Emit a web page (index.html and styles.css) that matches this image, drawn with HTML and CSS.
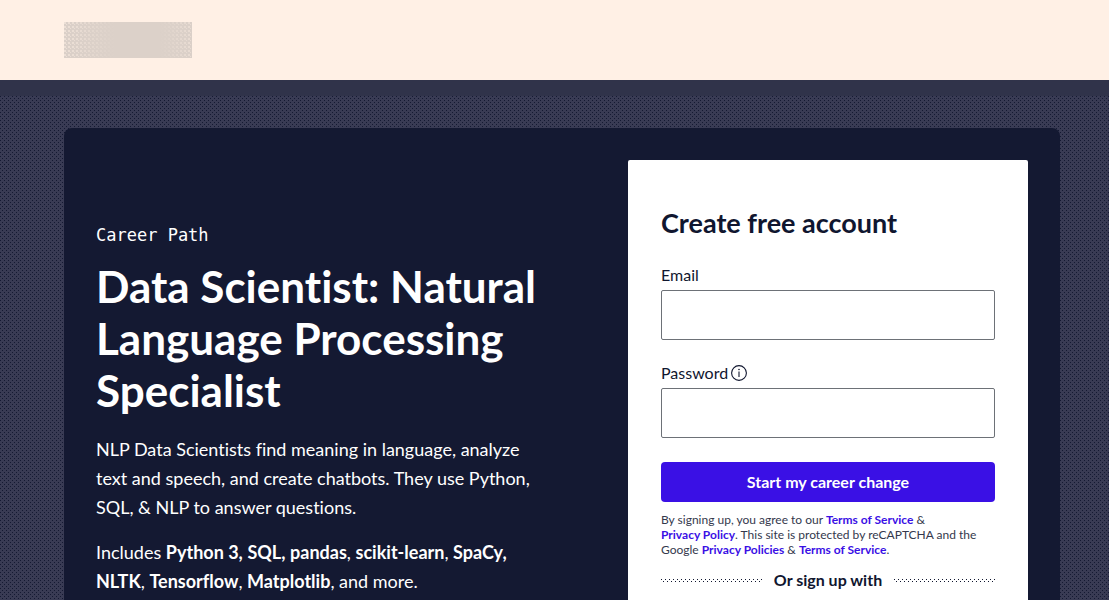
FILE: index.html
```html
<!DOCTYPE html>
<html lang="en">
<head>
<meta charset="utf-8">
<meta name="viewport" content="width=device-width, initial-scale=1">
<title>Data Scientist: Natural Language Processing Specialist</title>
<link rel="stylesheet" href="styles.css">
</head>
<body>
<header class="site-header"><div class="logo-placeholder"></div></header>
<main class="hero">
  <div class="card">
    <section class="intro">
      <p class="eyebrow">Career Path</p>
      <h1 class="title">Data Scientist: Natural Language Processing Specialist</h1>
      <p class="text">NLP Data Scientists find meaning in language, analyze text and speech, and create chatbots. They use Python, SQL, &amp; NLP to answer questions.</p>
      <p class="text">Includes <strong>Python 3,</strong> <strong>SQL,</strong> <strong>pandas</strong>, <strong>scikit-learn</strong>, <strong>SpaCy,</strong> <strong>NLTK</strong>, <strong>Tensorflow</strong>, <strong>Matplotlib</strong>, and more.</p>
    </section>
    <form class="signup">
      <h2 class="signup-title">Create free account</h2>
      <div class="field">
        <label class="label" for="email">Email</label>
        <input class="input" id="email" type="email">
      </div>
      <div class="field">
        <div class="label-row">
          <label class="label" for="password">Password</label>
          <button class="info" type="button" aria-label="Password requirements">
            <svg class="info-icon" viewBox="0 0 16 16" aria-hidden="true"><circle cx="8" cy="8" r="7.4" fill="none" stroke="currentColor" stroke-width="1.1"/><path d="M8 6.6V12" fill="none" stroke="currentColor" stroke-width="1.1"/><circle cx="8" cy="4.5" r=".8" fill="currentColor"/></svg>
          </button>
        </div>
        <input class="input" id="password" type="password">
      </div>
      <button class="submit" type="submit">Start my career change</button>
      <p class="legal">By signing up, you agree to our <a class="link" href="#terms">Terms of Service</a> &amp; <br><a class="link" href="#privacy">Privacy Policy</a>. This site is protected by reCAPTCHA and the Google <a class="link" href="#google-privacy">Privacy Policies</a> &amp; <a class="link" href="#google-terms">Terms of Service</a>.</p>
      <div class="divider"><span class="dots"></span><span class="divider-text">Or sign up with</span><span class="dots"></span></div>
    </form>
  </div>
</main>
</body>
</html>
```
FILE: styles.css
```css
* { box-sizing: border-box; }
html { scrollbar-width: none; }
body {
  margin: 0;
  background: #fff0e5;
  color: #10162f;
  font-family: Lato, "Open Sans", sans-serif;
  font-variant-ligatures: none;
}
h1, h2, p { margin: 0; }
.site-header {
  display: flex;
  align-items: center;
  height: 80px;
  padding: 0 64px;
}
.logo-placeholder {
  width: 128px;
  height: 36px;
  background:
    linear-gradient(90deg, transparent -40%, #dcd1c9 40%, #dcd1c9 75%, transparent 140%),
    conic-gradient(from 270deg at 2px 2px, #fff0e5 90deg, transparent 0) 0 0 / 4px 4px,
    conic-gradient(from 270deg at 1px 1px, #fff0e5 90deg, transparent 0) 2px 2px / 4px 4px,
    #d9cec7;
}
.hero {
  padding: 48px 49px 48px 64px;
  background:
    linear-gradient(#30334a, #30334a) 0 0 / 100% 16px no-repeat,
    conic-gradient(from 270deg at 1px 1px, #141932 90deg, transparent 0) 0 0 / 4px 4px,
    conic-gradient(from 270deg at 1px 1px, #141932 90deg, transparent 0) 2px 2px / 4px 4px,
    #393b54;
}
.card {
  display: grid;
  grid-template-columns: minmax(0, 1fr) 400px;
  column-gap: 80px;
  padding: 32px;
  border-radius: 8px;
  background: #141932;
}
.intro {
  padding-top: 65px;
  color: #fff;
}
.eyebrow {
  margin-bottom: 15px;
  font: 17px/20px "DejaVu Sans Mono", "Liberation Mono", monospace;
}
.title {
  margin-bottom: 19px;
  font-size: 44px;
  line-height: 52px;
  font-weight: 700;
}
.text {
  margin-bottom: 16px;
  font-size: 18px;
  line-height: 29px;
}
.signup {
  padding: 44px 33px 48px;
  border-radius: 2px;
  background: #fff;
}
.signup-title {
  margin-bottom: 23px;
  font-size: 27px;
  line-height: 38px;
}
.field { margin-bottom: 24px; }
.label {
  display: block;
  font-size: 16px;
  line-height: 20px;
}
.label-row {
  display: flex;
  align-items: center;
  gap: 3px;
}
.info {
  display: flex;
  padding: 0;
  border: 0;
  background: none;
  color: #10162f;
}
.info-icon {
  width: 16px;
  height: 16px;
}
.input {
  display: block;
  width: 100%;
  height: 50px;
  margin-top: 5px;
  padding: 0 12px;
  border: 1px solid #6d7177;
  border-radius: 2px;
  background: #fff;
  font: 16px/24px Lato, sans-serif;
}
.field + .field { margin-top: -1px; }
.submit {
  width: 100%;
  height: 40px;
  border: 0;
  border-radius: 4px;
  background: #3a10e5;
  color: #fff;
  font: 700 16px/24px Lato, sans-serif;
}
.legal {
  margin-top: 10px;
  color: #34384c;
  font-size: 12px;
  line-height: 15px;
}
.link {
  color: #3a10e5;
  font-weight: 700;
  text-decoration: none;
}
.divider {
  display: flex;
  align-items: center;
  gap: 12px;
  margin-top: 11px;
}
.divider-text {
  font-size: 16px;
  line-height: 24px;
  font-weight: 700;
}
.dots {
  flex: 1;
  height: 3px;
  background:
    conic-gradient(from 270deg at 1px 1px, #10162f 90deg, transparent 0) 0 0 / 4px 4px,
    conic-gradient(from 270deg at 1px 1px, #10162f 90deg, transparent 0) 2px 2px / 4px 4px;
}
```
